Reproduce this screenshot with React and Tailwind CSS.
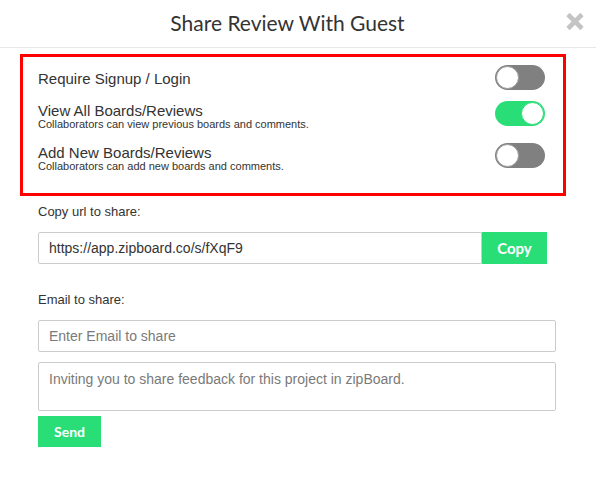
import React from "react";

function Toggle({ on }) {
  return (
    <div
      className={
        "relative w-[50px] h-[25px] rounded-full shrink-0 " +
        (on ? "bg-[#2ade77]" : "bg-[#808080]")
      }
    >
      <div
        className={
          "absolute top-[1px] w-[23px] h-[23px] rounded-full bg-white " +
          (on ? "right-[1px] border border-[#2ade77]" : "left-[1px] border border-[#9a9a9a]")
        }
      />
    </div>
  );
}

export default function App() {
  return (
    <div
      className="w-[596px] h-[482px] bg-white text-[#333]"
      style={{ fontFamily: '"Liberation Sans", Arial, sans-serif' }}
    >
      <div className="relative h-[48px] border-b border-[#e8e8e8] flex items-center justify-center pr-[21px]">
        <div
          className="text-[21px] text-[#333] leading-none pb-[2px]"
          style={{ fontFamily: "Lato, sans-serif" }}
        >
          Share Review With Guest
        </div>
        <svg
          className="absolute right-[11px] top-[12px]"
          width="20"
          height="19"
          viewBox="0 0 20 19"
        >
          <path
            d="M3 2.5 L17 16.5 M17 2.5 L3 16.5"
            stroke="#c4c4c4"
            strokeWidth="4.6"
            strokeLinecap="butt"
          />
        </svg>
      </div>

      <div className="pt-[6px] px-[20px]">
        <div className="w-[546px] h-[142px] border-[3px] border-[#ff0000] pl-[15px] pr-[18px] pt-[8px]">
          <div className="flex items-center justify-between h-[24px]">
            <div className="text-[15px] leading-[15px] pt-[3px]">Require Signup / Login</div>
            <Toggle on={false} />
          </div>
          <div className="flex items-start justify-between mt-[12px]">
            <div className="pt-[2px]">
              <div className="text-[15px] leading-[15px]">View All Boards/Reviews</div>
              <div className="text-[11px] leading-[12px]">
                Collaborators can view previous boards and comments.
              </div>
            </div>
            <Toggle on={true} />
          </div>
          <div className="flex items-start justify-between mt-[13px]">
            <div className="pt-[2px]">
              <div className="text-[15px] leading-[15px]">Add New Boards/Reviews</div>
              <div className="text-[11px] leading-[12px]">
                Collaborators can add new boards and comments.
              </div>
            </div>
            <Toggle on={false} />
          </div>
        </div>

        <div className="pl-[18px]">
          <div className="mt-[8px] text-[13px] leading-[15px]">Copy url to share:</div>
          <div className="mt-[13px] flex">
            <div className="w-[444px] h-[32px] border border-[#cccccc] rounded-l-[2px] flex items-center pl-[10px] text-[14px] text-[#333]">
              https://app.zipboard.co/s/fXqF9
            </div>
            <div
              className="w-[65px] h-[32px] bg-[#2ade77] text-white text-[15px] font-bold flex items-center justify-center"
              style={{ fontFamily: "Lato, sans-serif" }}
            >
              Copy
            </div>
          </div>

          <div className="mt-[28px] text-[13px] leading-[15px]">Email to share:</div>
          <div className="mt-[13px] w-[518px] h-[32px] border border-[#cccccc] rounded-[2px] flex items-center pl-[10px] text-[14px] text-[#7a7a7a]">
            Enter Email to share
          </div>
          <div className="mt-[10px] w-[518px] h-[49px] border border-[#cccccc] rounded-[2px] pl-[10px] pt-[7px] text-[14px] leading-[18px] text-[#7a7a7a]">
            Inviting you to share feedback for this project in zipBoard.
          </div>
          <div
            className="mt-[5px] w-[63px] h-[31px] bg-[#2ade77] text-white text-[14px] font-bold flex items-center justify-center"
            style={{ fontFamily: "Lato, sans-serif" }}
          >
            Send
          </div>
        </div>
      </div>
    </div>
  );
}
